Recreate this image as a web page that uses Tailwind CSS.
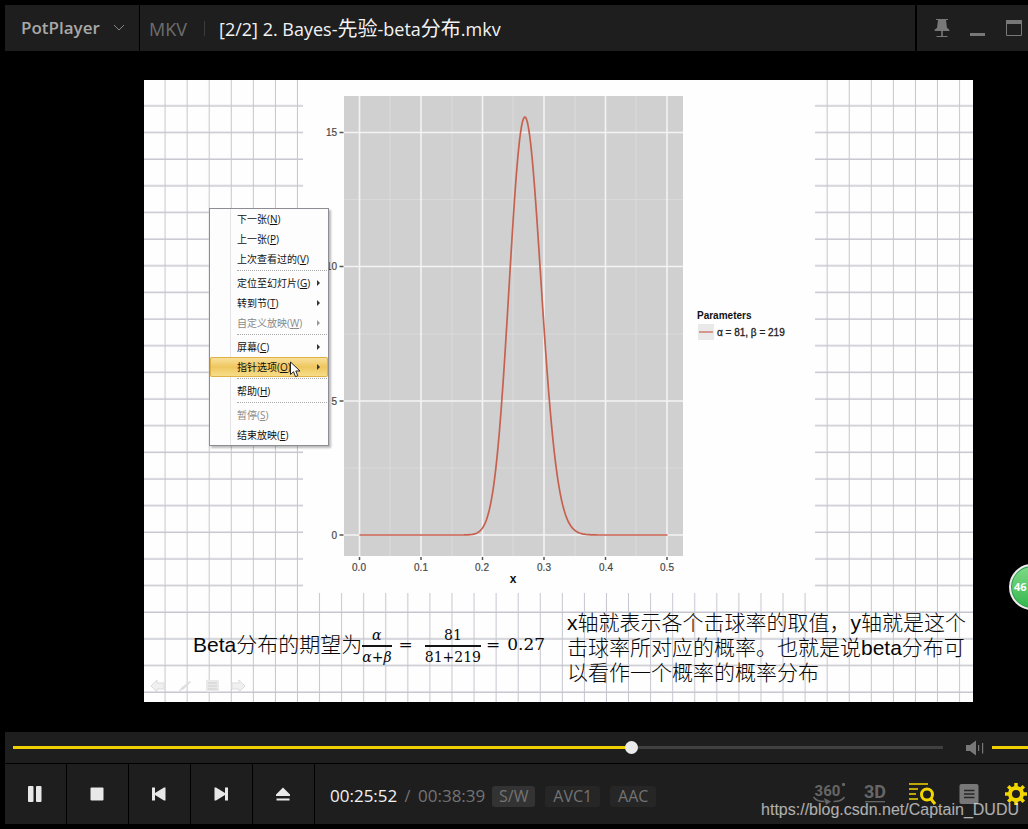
<!DOCTYPE html>
<html lang="zh-CN">
<head>
<meta charset="utf-8">
<title>PotPlayer</title>
<script src="https://cdn.jsdelivr.net/npm/@tailwindcss/browser@4"></script>
</head>
<body class="bg-black">
<div class="relative flex h-screen flex-col overflow-hidden bg-black py-[5px] pl-[5px] font-['Open_Sans','Noto_Sans_CJK_SC',sans-serif]">

  <!-- Title bar -->
  <header class="flex h-[46px] shrink-0 text-[#6a6a6a]">
    <button class="mr-px flex w-[134px] items-center bg-[#1e1e1e] pb-px pl-4 text-left">
      <span class="w-[81px] text-[17px] font-semibold text-[#a8a8a8]">PotPlayer</span>
      <svg class="ml-[11px] mt-px h-2 w-3" viewBox="0 0 12 8" fill="none" stroke="#858585"><path d="M1 1l5 5 5-5"/></svg>
    </button>
    <div class="mr-0.5 flex min-w-0 flex-1 items-center bg-[#1e1e1e] pl-[9px]">
      <span class="w-[40px] pt-0.5 text-[18px] text-[#6e6e6e]">MKV</span>
      <span class="ml-[15px] h-[15px] w-px bg-[#3c3c3c]"></span>
      <h1 class="ml-[14px] truncate pt-0.5 text-[18px] leading-[30px] text-[#f2f2f2]">[2/2] 2. Bayes-<span class="text-[20px]">先验</span>-beta<span class="text-[20px]">分布</span>.mkv</h1>
    </div>
    <div class="flex w-[111px] items-center bg-[#1e1e1e] pl-[17px]">
      <button aria-label="置顶" class="h-5 w-4"><svg viewBox="0 0 16 20" class="h-5 w-4" fill="#787878"><path d="M2 1h12v1h-2l1 8c1.500.5 2.500 1.500 2.500 3H.5c0-1.500 1-2.500 2.500-3l1-8H2z"/><path d="M7.200 13h1.600v5H7.200zM2.500 18h11v1h-11z"/></svg></button>
      <button aria-label="最小化" class="ml-5 h-5 w-4"><svg viewBox="0 0 16 20" class="h-5 w-4" fill="#787878"><path d="M0 15h15v3H0z"/></svg></button>
      <button aria-label="最大化" class="ml-5 h-5 w-4"><svg viewBox="0 0 16 20" class="h-5 w-4"><path d="M.5 2.500h15v15H.5z" fill="none" stroke="#787878"/><path d="M0 2h16v4H0z" fill="#787878"/></svg></button>
    </div>
  </header>

  <!-- Video area with the slide -->
  <main class="min-h-0 flex-1 pb-[30px] pl-[139px] pr-[55px] pt-[29px]">
    <section class="relative flex h-full flex-col bg-[#fefefe]">
      <svg class="absolute inset-0 h-full w-full" aria-hidden="true">
        <defs><pattern id="squares" x="-.5" y="0" width="22.07" height="26.65" patternUnits="userSpaceOnUse"><path d="M21.500 0V26.650M-1 26H23" transform="translate(.3 0)" stroke="#c6c6d0" stroke-width="1.500" fill="none"/></pattern></defs>
        <rect width="100%" height="100%" fill="url(#squares)"/>
      </svg>

      <figure class="relative ml-[159px] h-[513px] w-[512px] bg-[#fefefe]">
        <svg class="h-full w-full font-['Liberation_Sans',sans-serif]" viewBox="303 80 512 513" role="img" aria-label="Beta(81, 219)">
          <rect x="344" y="96" width="339" height="460" fill="#d0d0d0"/>
          <path d="M390 96V556M452 96V556M513 96V556M575 96V556M636 96V556M344 199.500H683M344 334H683M344 468H683" stroke="#dadada" stroke-width="1.200"/>
          <path d="M359.500 96V556M421 96V556M482.500 96V556M544 96V556M605.500 96V556M667 96V556M344 132.500H683M344 266.500H683M344 401H683M344 535H683" stroke="#f3f3f3" stroke-width="1.600"/>
          <path d="M359.500 557v3M421 557v3M482.500 557v3M544 557v3M605.500 557v3M667 557v3M339.500 132.500h4M339.500 266.500h4M339.500 401h4M339.500 535h4" stroke="#555" stroke-width="1.500"/>
          <path id="density" fill="none" stroke="#c7614f" stroke-width="1.700"/>
          <g font-size="10" fill="#484848" text-anchor="end" stroke="#484848" stroke-width=".2">
            <text x="337" y="136">15</text><text x="337" y="270">10</text><text x="337" y="405">5</text><text x="337" y="539">0</text>
          </g>
          <g font-size="10" fill="#484848" text-anchor="middle" stroke="#484848" stroke-width=".2">
            <text x="359" y="571">0.0</text><text x="421" y="571">0.1</text><text x="482" y="571">0.2</text><text x="544" y="571">0.3</text><text x="606" y="571">0.4</text><text x="667" y="571">0.5</text>
          </g>
          <text x="513" y="583" font-size="12" font-weight="bold" text-anchor="middle" fill="#111">x</text>
          <text x="697" y="319" font-size="10" font-weight="bold" fill="#111">Parameters</text>
          <rect x="698" y="324" width="16" height="16" fill="#e9e9e9"/>
          <path d="M699 332h14" stroke="#cf7b70" stroke-width="1.500"/>
          <text x="717" y="336" font-size="10" fill="#222" stroke="#222" stroke-width=".3">α = 81, β = 219</text>
        </svg>
      </figure>

      <div class="relative flex flex-1 text-[21px] text-[#080808]">
        <div class="flex w-[423px] shrink-0 flex-col pt-[30px]">
          <div class="flex h-[44px] items-center whitespace-nowrap pl-[49px]">
            <span class="font-['Liberation_Sans','Noto_Sans_CJK_SC',sans-serif] font-light">Beta分布的期望为</span>
            <span class="mt-0.5 flex flex-col items-center font-['DejaVu_Serif',serif] text-[14px] leading-[20px]"><i>α</i><span class="h-[2px] w-full bg-[#151515]"></span><span><i>α</i>+<i>β</i></span></span>
            <span class="px-[7px] font-['DejaVu_Serif',serif] text-[17px]">=</span>
            <span class="ml-[5px] mt-0.5 flex flex-col items-center font-['DejaVu_Serif',serif] text-[14px] leading-[20px]"><span>81</span><span class="h-[2px] w-full bg-[#151515]"></span><span>81+219</span></span>
            <span class="pl-[5px] pr-[7px] font-['DejaVu_Serif',serif] text-[17px]">=</span>
            <span class="font-['DejaVu_Serif',serif] text-[17px]">0.27</span>
          </div>
          <div class="flex gap-[11px] pl-[6px] pt-[11px]">
            <button aria-label="上一页"><svg class="h-4 w-4" viewBox="0 0 16 16"><path d="M1 8l6-6v3h7v6H7v3z" fill="#f0f0f0" stroke="#dcdcdc"/></svg></button>
            <button aria-label="画笔"><svg class="h-4 w-4" viewBox="0 0 16 16"><path d="M1 14l4-5 8-6 1 1-7 7z" fill="#dedede"/></svg></button>
            <button aria-label="菜单"><svg class="h-4 w-4" viewBox="0 0 16 16"><rect x="2" y="2" width="13" height="12" rx="1" fill="#e9e9e9"/><path d="M4 5h9M4 8h9M4 11h9" stroke="#cfcfcf"/></svg></button>
            <button aria-label="下一页"><svg class="h-4 w-4" viewBox="0 0 16 16"><path d="M14 8L8 2v3H1v6h7v3z" fill="#f0f0f0" stroke="#dcdcdc"/></svg></button>
          </div>
        </div>
        <p class="flex-1 pt-[17px] font-['Liberation_Sans','Noto_Sans_CJK_SC',sans-serif] font-light leading-[25px]">x轴就表示各个击球率的取值，y轴就是这个击球率所对应的概率。也就是说beta分布可以看作一个概率的概率分布</p>
      </div>

      <!-- Slide-show context menu -->
      <div role="menu" class="absolute left-[65px] top-[128px] w-[120px] border border-[#8d8d93] bg-[#fdfdfd] text-[10px] leading-[20px] text-[#111] shadow-[2px_2px_2px_#0004]">
        <div class="absolute inset-y-0 left-[20px] w-px bg-[#e4e4e8]"></div>
        <div class="relative flex flex-col [&>button]:flex [&>button]:h-5 [&>button]:items-center [&>button]:justify-between [&>button]:pl-[27px] [&>button]:pr-2 [&>hr]:my-[1px] [&>hr]:ml-[27px] [&>hr]:mr-px [&>hr]:h-[2px] [&>hr]:border-t [&>hr]:border-dotted [&>hr]:border-[#aaa]">
          <button role="menuitem"><span>下一张(<u>N</u>)</span></button>
          <button role="menuitem"><span>上一张(<u>P</u>)</span></button>
          <button role="menuitem"><span>上次查看过的(<u>V</u>)</span></button>
          <hr>
          <button role="menuitem"><span>定位至幻灯片(<u>G</u>)</span><svg class="h-[6px] w-[3px]" viewBox="0 0 3 6"><path d="M0 0l3 3-3 3z" fill="#333"/></svg></button>
          <button role="menuitem"><span>转到节(<u>T</u>)</span><svg class="h-[6px] w-[3px]" viewBox="0 0 3 6"><path d="M0 0l3 3-3 3z" fill="#333"/></svg></button>
          <button role="menuitem" class="text-[#8a8a8a]"><span>自定义放映(<u>W</u>)</span><svg class="h-[6px] w-[3px]" viewBox="0 0 3 6"><path d="M0 0l3 3-3 3z" fill="#999"/></svg></button>
          <hr>
          <button role="menuitem"><span>屏幕(<u>C</u>)</span><svg class="h-[6px] w-[3px]" viewBox="0 0 3 6"><path d="M0 0l3 3-3 3z" fill="#333"/></svg></button>
          <button role="menuitem" class="rounded-[2px] bg-linear-to-b from-[#f9e3a0] via-[#efc65e] to-[#f8e08e] ring-1 ring-inset ring-[#dfb248]"><span>指针选项(<u>O</u>)</span><svg class="h-[6px] w-[3px]" viewBox="0 0 3 6"><path d="M0 0l3 3-3 3z" fill="#333"/></svg></button>
          <hr>
          <button role="menuitem"><span>帮助(<u>H</u>)</span></button>
          <hr>
          <button role="menuitem" class="text-[#8a8a8a]"><span>暂停(<u>S</u>)</span></button>
          <button role="menuitem"><span>结束放映(<u>E</u>)</span></button>
        </div>
      </div>
      <svg class="absolute left-[146px] top-[281px] h-[17px] w-[11px]" viewBox="0 0 11 17"><path d="M.5 1v12.500l3-2.800 2 5 2.300-1-2-4.700h4.200z" fill="#fff" stroke="#222"/></svg>
    </section>
  </main>

  <!-- Seek bar and volume -->
  <div class="mb-px flex h-[31px] shrink-0 items-center bg-[#1e1e1e] pl-2">
    <input type="range" aria-label="播放进度" min="0" max="2319" value="1547" class="h-[13px] min-w-0 flex-1 appearance-none bg-[linear-gradient(90deg,#efcf00_66.500%,#404040_66.500%)] bg-[length:100%_3px] bg-center bg-no-repeat [&::-webkit-slider-thumb]:h-[13px] [&::-webkit-slider-thumb]:w-[13px] [&::-webkit-slider-thumb]:appearance-none [&::-webkit-slider-thumb]:rounded-full [&::-webkit-slider-thumb]:bg-[#ebebeb]">
    <button aria-label="静音" class="ml-[22px] h-4 w-5"><svg class="h-4 w-5" viewBox="0 0 20 16" fill="#787878"><path d="M1 5h4l6-4.500v15L5 11H1z"/><path d="M13 5h1.200v6H13zM17 3h1.200v10.500H17z"/></svg></button>
    <input type="range" aria-label="音量" value="100" class="ml-[7px] h-[13px] w-[36px] appearance-none bg-[linear-gradient(#efcf00,#efcf00)] bg-[length:100%_3px] bg-center bg-no-repeat [&::-webkit-slider-thumb]:w-px [&::-webkit-slider-thumb]:appearance-none">
  </div>

  <!-- Playback controls -->
  <footer class="flex h-[60px] shrink-0">
    <div class="flex gap-px [&>button]:flex [&>button]:w-[61px] [&>button]:items-center [&>button]:justify-center [&>button]:bg-[#1e1e1e] [&>button]:pr-0.5">
      <button aria-label="暂停"><svg class="h-4 w-4" viewBox="0 0 16 16" fill="#e8e8e8"><rect x="1" width="5.500" height="16" rx="1"/><rect x="9" width="5.500" height="16" rx="1"/></svg></button>
      <button aria-label="停止"><svg class="h-4 w-4" viewBox="0 0 16 16" fill="#e8e8e8"><rect x="1.500" y="1.500" width="13" height="13" rx="1"/></svg></button>
      <button aria-label="上一个"><svg class="h-4 w-4" viewBox="0 0 16 16" fill="#e8e8e8"><path d="M1 1.500h3v5.500L13 1.500h1.500v13H13L4 9v5.500H1z"/></svg></button>
      <button aria-label="下一个"><svg class="h-4 w-4" viewBox="0 0 16 16" fill="#e8e8e8"><path d="M15 1.500h-3v5.500L3 1.500H1.500v13H3L12 9v5.500h3z"/></svg></button>
      <button aria-label="打开"><svg class="h-4 w-4" viewBox="0 0 16 16" fill="#e8e8e8"><path d="M8 1.500l7 7v1.500H1V8.500zM1.500 12.500h13v2h-13z"/></svg></button>
    </div>
    <div class="ml-px flex min-w-0 flex-1 items-center overflow-hidden bg-[#1e1e1e] pl-[15px] text-[16px] text-[#737373]">
      <time class="mt-1 w-[67px] text-[17px] text-[#f2f2f2]">00:25:52</time>
      <span class="mt-1 w-[21px] text-center">/</span>
      <time class="mt-1 text-[17px]">00:38:39</time>
      <button class="ml-[7px] mt-1 h-[21px] w-[43px] rounded-[3px] bg-[#333] leading-[21px]">S/W</button>
      <button class="ml-[10px] mt-1 h-[21px] w-[55px] rounded-[3px] bg-[#262626] leading-[21px]">AVC1</button>
      <button class="ml-[10px] mt-1 h-[21px] w-[46px] rounded-[3px] bg-[#262626] leading-[21px]">AAC</button>
      <div class="ml-auto flex shrink-0 items-center">
        <button aria-label="360°" class="h-6 w-[34px]"><svg class="h-6 w-[34px]" viewBox="0 0 34 24" fill="#666"><text x="15.500" y="14" font-family="Roboto" font-weight="bold" font-size="15" text-anchor="middle">360</text><rect x="30" y="1" width="3" height="3" rx="1"/><path d="M1.500 15c2 3 6 4.500 11 4.500M32.500 15c-2 3-7 4.500-11 4.500" fill="none" stroke="#666" stroke-width="1.500"/><path d="M12 16l7 3.500-5 3.500z"/></svg></button>
        <button aria-label="3D" class="ml-[15px] h-6 w-7"><svg class="h-6 w-7" viewBox="0 0 28 24" fill="#666"><text x="14" y="16" font-family="Roboto" font-weight="bold" font-size="18" text-anchor="middle">3D</text><path d="M4 19h20v1.300H4z"/></svg></button>
        <button aria-label="播放列表搜索" class="ml-[19px] h-6 w-7"><svg class="h-6 w-7" viewBox="0 0 28 24" fill="none" stroke="#f2d600" stroke-width="1.500"><path d="M1 2h19M1 7h9M1 12h7M1 17h9"/><circle cx="19" cy="12.500" r="5.500" stroke-width="3"/><path d="M23 17l4 5" stroke-width="3"/></svg></button>
        <button aria-label="播放列表" class="ml-[23px] h-6 w-5"><svg class="h-6 w-5" viewBox="0 0 20 24"><rect x=".5" y="2" width="19" height="20" rx="2" fill="#787878"/><path d="M5 8.500h10.500M5 12h10.500M5 15.500h10.500" stroke="#262626" stroke-width="1.500"/></svg></button>
        <button aria-label="设置" class="ml-[26px] mr-px h-6 w-[22px]"><svg class="h-6 w-[22px] overflow-visible" viewBox="0 0 22 24"><g fill="none" stroke="#f2d600"><circle cx="11" cy="12" r="6" stroke-width="4"/><path d="M11 1v4M11 19v4M0 12h4M18 12h4M3.200 4.200l3 3M15.800 16.800l3 3M18.800 4.200l-3 3M6.200 16.800l-3 3" stroke-width="3.500"/></g></svg></button>
      </div>
    </div>
  </footer>

  <!-- Floating ball and watermark over the player -->
  <button class="absolute -right-[27px] top-[564px] flex h-[46px] w-[46px] items-center rounded-full border-2 border-[#ececec] bg-linear-to-b from-[#7ed987] to-[#2fb84c] pl-[3px] text-[11px] font-bold text-white ring-1 ring-inset ring-[#2c9a54]">46</button>
  <a href="https://blog.csdn.net/Captain_DUDU" class="absolute bottom-[7px] right-[9px] font-['Liberation_Sans',sans-serif] text-[16px] text-white/65">https://blog.csdn.net/Captain_DUDU</a>
</div>
<script>
  // Density of Beta(81, 219) in chart coordinates
  const a = 80, b = 218, mode = a / (a + b);
  const top0 = a * Math.log(mode) + b * Math.log(1 - mode);
  let d = '';
  for (let i = 0; i <= 308; i++) {
    const t = i / 616 + 1e-9;
    const p = 15.58 * Math.exp(a * Math.log(t) + b * Math.log(1 - t) - top0);
    d += (i ? 'L' : 'M') + (359.5 + 616 * t).toFixed(1) + ' ' + (535 - 26.83 * p).toFixed(1);
  }
  document.getElementById('density').setAttribute('d', d);
</script>
</body>
</html>
